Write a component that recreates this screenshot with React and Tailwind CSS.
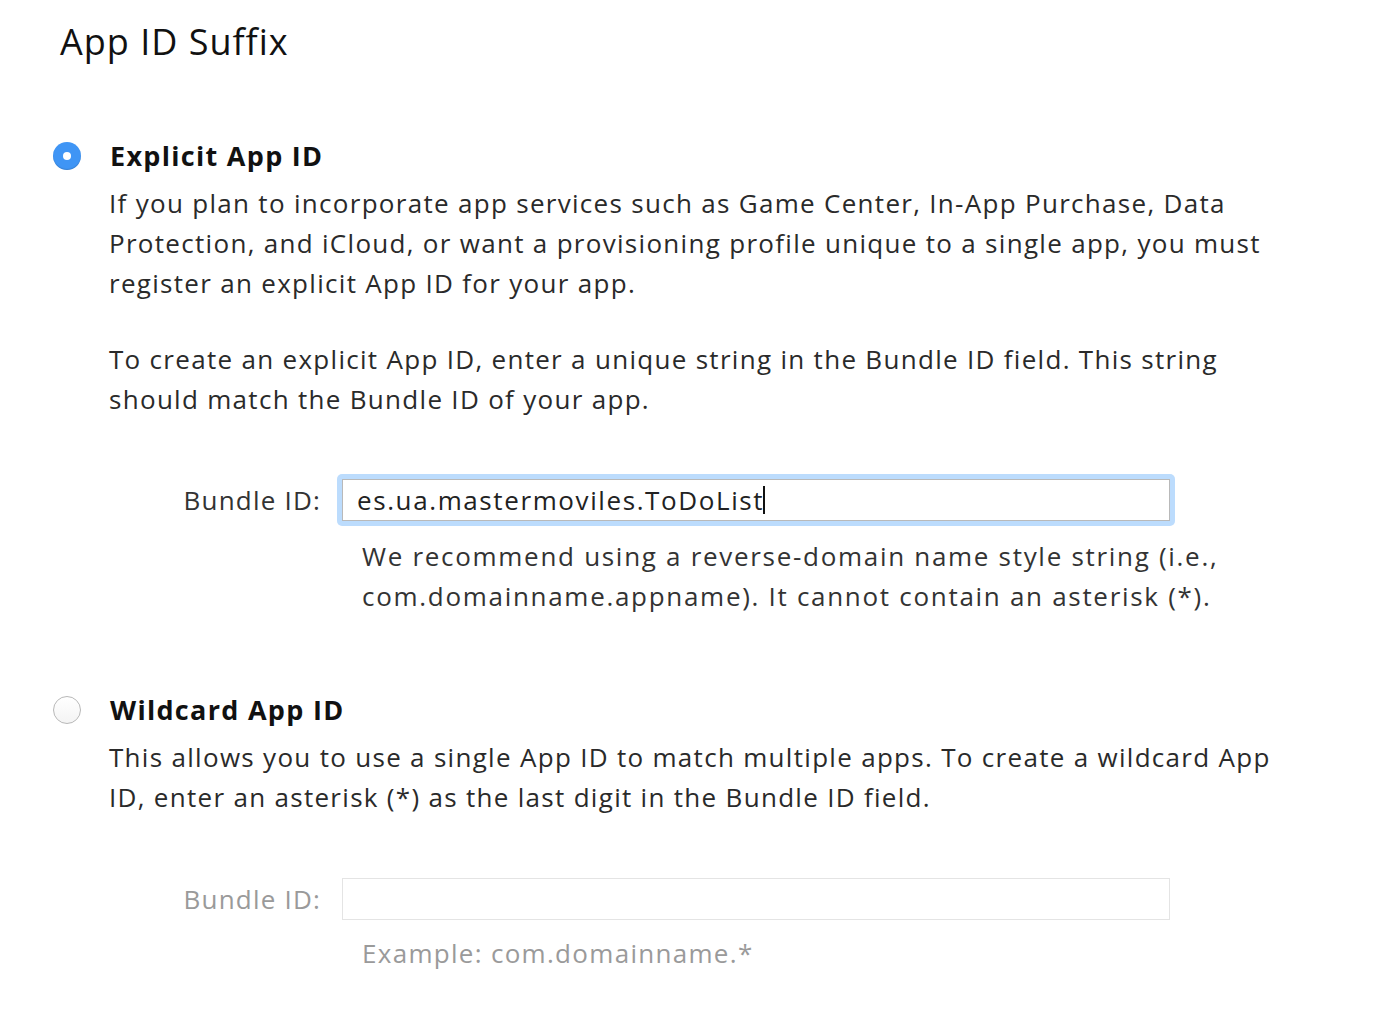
import React from "react";

const font = { fontFamily: '"Open Sans", "Noto Sans", sans-serif' };

function Radio({ checked }) {
  if (checked) {
    return (
      <span className="flex h-[28px] w-[28px] items-center justify-center rounded-full bg-[#3f95f5] shadow-[inset_0_-1px_1px_rgba(0,0,0,0.15)]">
        <span className="h-[8px] w-[8px] rounded-full bg-white" />
      </span>
    );
  }
  return (
    <span className="block h-[28px] w-[28px] rounded-full border border-[#b8b8b8] bg-gradient-to-b from-white to-[#f4f4f4]" />
  );
}

export default function App() {
  return (
    <div className="min-h-screen bg-white text-[#222]" style={font}>
      <div className="px-[60px] pt-[20px]">
        <h1 className="text-[36px] leading-[44px] tracking-[1px] text-[#111]">App ID Suffix</h1>

        {/* Explicit */}
        <section className="mt-[76px] -ml-[7px]">
          <div className="flex items-center gap-[29px]">
            <Radio checked />
            <h2 className="text-[27px] font-bold leading-[32px] tracking-[1.3px] text-[#111]">Explicit App ID</h2>
          </div>
          <div className="pl-[56px] text-[26px] leading-[40px] tracking-[1.3px] text-[#2a2a2a]">
            <p className="mt-[11px] max-w-[1160px]">
              If you plan to incorporate app services such as Game Center, In-App Purchase, Data Protection, and iCloud, or want a provisioning profile unique to a single app, you must register an explicit App ID for your app.
            </p>
            <p className="mt-[36px] max-w-[1130px]">
              To create an explicit App ID, enter a unique string in the Bundle ID field. This string should match the Bundle ID of your app.
            </p>

            <div className="mt-[55px] flex items-center">
              <label className="w-[228px] pr-[16px] text-right tracking-[1.2px] text-[#333]">Bundle ID:</label>
              <div className="rounded-[5px] bg-[#bcdcfd] p-[5px]">
                <div className="flex h-[42px] w-[828px] items-center border border-[#b9b9b9] bg-white px-[14px] tracking-[1.6px] text-[#222]">
                  es.ua.mastermoviles.ToDoList
                  <span className="ml-[-1px] inline-block h-[28px] w-[2px] bg-[#111]" />
                </div>
              </div>
            </div>
            <p className="mt-[10px] ml-[253px] max-w-[880px] tracking-[1.7px] text-[#333]">
              We recommend using a reverse-domain name style string (i.e., com.domainname.appname). It cannot contain an asterisk (*).
            </p>
          </div>
        </section>

        {/* Wildcard */}
        <section className="mt-[78px] -ml-[7px]">
          <div className="flex items-center gap-[29px]">
            <Radio />
            <h2 className="text-[27px] font-bold leading-[32px] tracking-[1.3px] text-[#111]">Wildcard App ID</h2>
          </div>
          <div className="pl-[56px] text-[26px] leading-[40px] tracking-[1.3px] text-[#2a2a2a]">
            <p className="mt-[11px] max-w-[1180px]">
              This allows you to use a single App ID to match multiple apps. To create a wildcard App ID, enter an asterisk (*) as the last digit in the Bundle ID field.
            </p>
            <div className="mt-[61px] flex items-center">
              <label className="w-[233px] pr-[21px] text-right tracking-[1.2px] text-[#9a9a9a]">Bundle ID:</label>
              <div className="h-[42px] w-[828px] border border-[#e4e4e4] bg-white" />
            </div>
            <p className="mt-[13px] ml-[253px] tracking-[1.3px] text-[#9a9a9a]">Example: com.domainname.*</p>
          </div>
        </section>
      </div>
    </div>
  );
}
